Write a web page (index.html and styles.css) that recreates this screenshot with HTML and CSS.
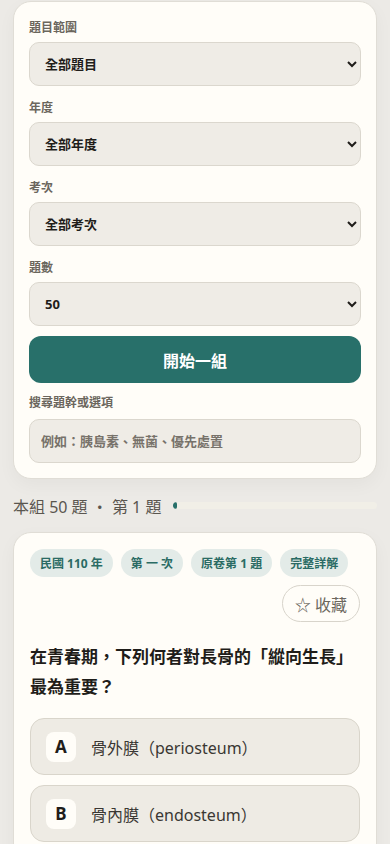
FILE: index.html
```html
<!DOCTYPE html>
<html lang="zh-Hant">
<head>
    <meta charset="UTF-8">
    <meta name="viewport" content="width=device-width, initial-scale=1.0">
    <title>題庫練習</title>
    <link rel="stylesheet" href="styles.css">
</head>
<body>
    <div class="page">
        <div class="card filters">
            <div class="field">
                <label for="scope">題目範圍</label>
                <select id="scope">
                    <option>全部題目</option>
                    <option>已收藏</option>
                    <option>答錯題目</option>
                </select>
            </div>
            <div class="field">
                <label for="year">年度</label>
                <select id="year">
                    <option>全部年度</option>
                    <option>民國 110 年</option>
                </select>
            </div>
            <div class="field">
                <label for="round">考次</label>
                <select id="round">
                    <option>全部考次</option>
                    <option>第一次</option>
                    <option>第二次</option>
                </select>
            </div>
            <div class="field">
                <label for="count">題數</label>
                <select id="count">
                    <option>50</option>
                    <option>20</option>
                    <option>80</option>
                </select>
            </div>
            <button class="start" type="button">開始一組</button>
            <div class="field search">
                <label for="keyword">搜尋題幹或選項</label>
                <input type="text" id="keyword" placeholder="例如：胰島素、無菌、優先處置">
            </div>
        </div>

        <div class="progress-row">
            <span class="progress-text">本組 50 題 ・ 第 1 題</span>
            <div class="progress-bar"><div class="progress-fill" style="width: 2%"></div></div>
        </div>

        <div class="card question">
            <div class="meta">
                <span class="tag">民國 110 年</span>
                <span class="tag">第 一 次</span>
                <span class="tag">原卷第 1 題</span>
                <span class="tag">完整詳解</span>
                <button class="bookmark" type="button">☆ 收藏</button>
            </div>
            <h2 class="stem">在青春期，下列何者對長骨的「縱向生長」最為重要？</h2>
            <div class="options">
                <button class="option" type="button"><span class="letter">A</span><span>骨外膜（periosteum）</span></button>
                <button class="option" type="button"><span class="letter">B</span><span>骨內膜（endosteum）</span></button>
            </div>
        </div>
    </div>
</body>
</html>
```

FILE: styles.css
```css
:root {
    --teal: #28706a;
    --paper: #fffdf8;
    --field: #efece6;
    --line: #dbd7ce;
    --muted: #6b665d;
    --ink: #1f1d1a;
}
* {
    box-sizing: border-box;
}
body {
    margin: 0;
    padding: 0;
    background: #eceae6;
    font-family: "Noto Sans", "Noto Sans CJK TC", sans-serif;
    color: var(--ink);
}
.page {
    padding: 1px 13px 20px;
}
.card {
    background: var(--paper);
    border: 1px solid #e0ddd6;
    border-radius: 18px;
    box-shadow: 0 6px 18px rgba(0,0,0,0.04);
}
.filters {
    padding: 18px 15px 15px;
}
.field {
    margin-bottom: 14px;
}
.field label {
    display: block;
    font-size: 12px;
    line-height: 16px;
    font-weight: 700;
    color: var(--muted);
    margin-bottom: 6px;
}
select, input {
    display: block;
    width: 100%;
    height: 44px;
    padding: 0 10px 0 11px;
    background: var(--field);
    border: 1px solid var(--line);
    border-radius: 10px;
    font-family: inherit;
    font-size: 13px;
    font-weight: 700;
    color: var(--ink);
}
input::placeholder {
    color: #77726a;
    font-weight: 700;
}
.start {
    display: block;
    width: 100%;
    height: 47px;
    margin: -4px 0 12px;
    background: var(--teal);
    color: white;
    border: none;
    border-radius: 12px;
    font-family: inherit;
    font-size: 16px;
    font-weight: 700;
}
.search {
    margin-bottom: 0;
}
.search label {
    margin-bottom: 8px;
}
.progress-row {
    display: flex;
    align-items: center;
    gap: 12px;
    height: 53px;
}
.progress-text {
    font-size: 16px;
    color: #5a564f;
    white-space: nowrap;
}
.progress-bar {
    flex: 1;
    height: 7px;
    background: #f1efe7;
    border-radius: 999px;
    overflow: hidden;
}
.progress-fill {
    height: 100%;
    background: var(--teal);
    border-radius: 999px;
}
.question {
    padding: 16px 16px 20px;
}
.meta {
    display: flex;
    flex-wrap: wrap;
    gap: 8px;
}
.tag {
    display: inline-flex;
    align-items: center;
    height: 28px;
    padding: 0 10px;
    background: #e3ebe8;
    color: #2a6b64;
    border-radius: 999px;
    font-size: 12px;
    font-weight: 700;
}
.bookmark {
    margin-left: auto;
    height: 37px;
    padding: 0 12px;
    background: transparent;
    border: 1px solid #d8d4cb;
    border-radius: 999px;
    font-family: inherit;
    font-size: 16px;
    color: var(--muted);
}
.stem {
    margin: 20px 0 16px;
    font-size: 17px;
    line-height: 30px;
    font-weight: 700;
}
.options {
    display: flex;
    flex-direction: column;
    gap: 10px;
}
.option {
    display: flex;
    align-items: center;
    gap: 15px;
    width: 100%;
    height: 57px;
    padding: 0 15px;
    background: #eeebe4;
    border: 1px solid #d9d5cb;
    border-radius: 14px;
    font-family: inherit;
    font-size: 16px;
    color: #3a3733;
    text-align: left;
}
.letter {
    display: flex;
    align-items: center;
    justify-content: center;
    width: 30px;
    height: 30px;
    background: var(--paper);
    border-radius: 8px;
    font-size: 17px;
    font-weight: 700;
    color: var(--ink);
}
```
